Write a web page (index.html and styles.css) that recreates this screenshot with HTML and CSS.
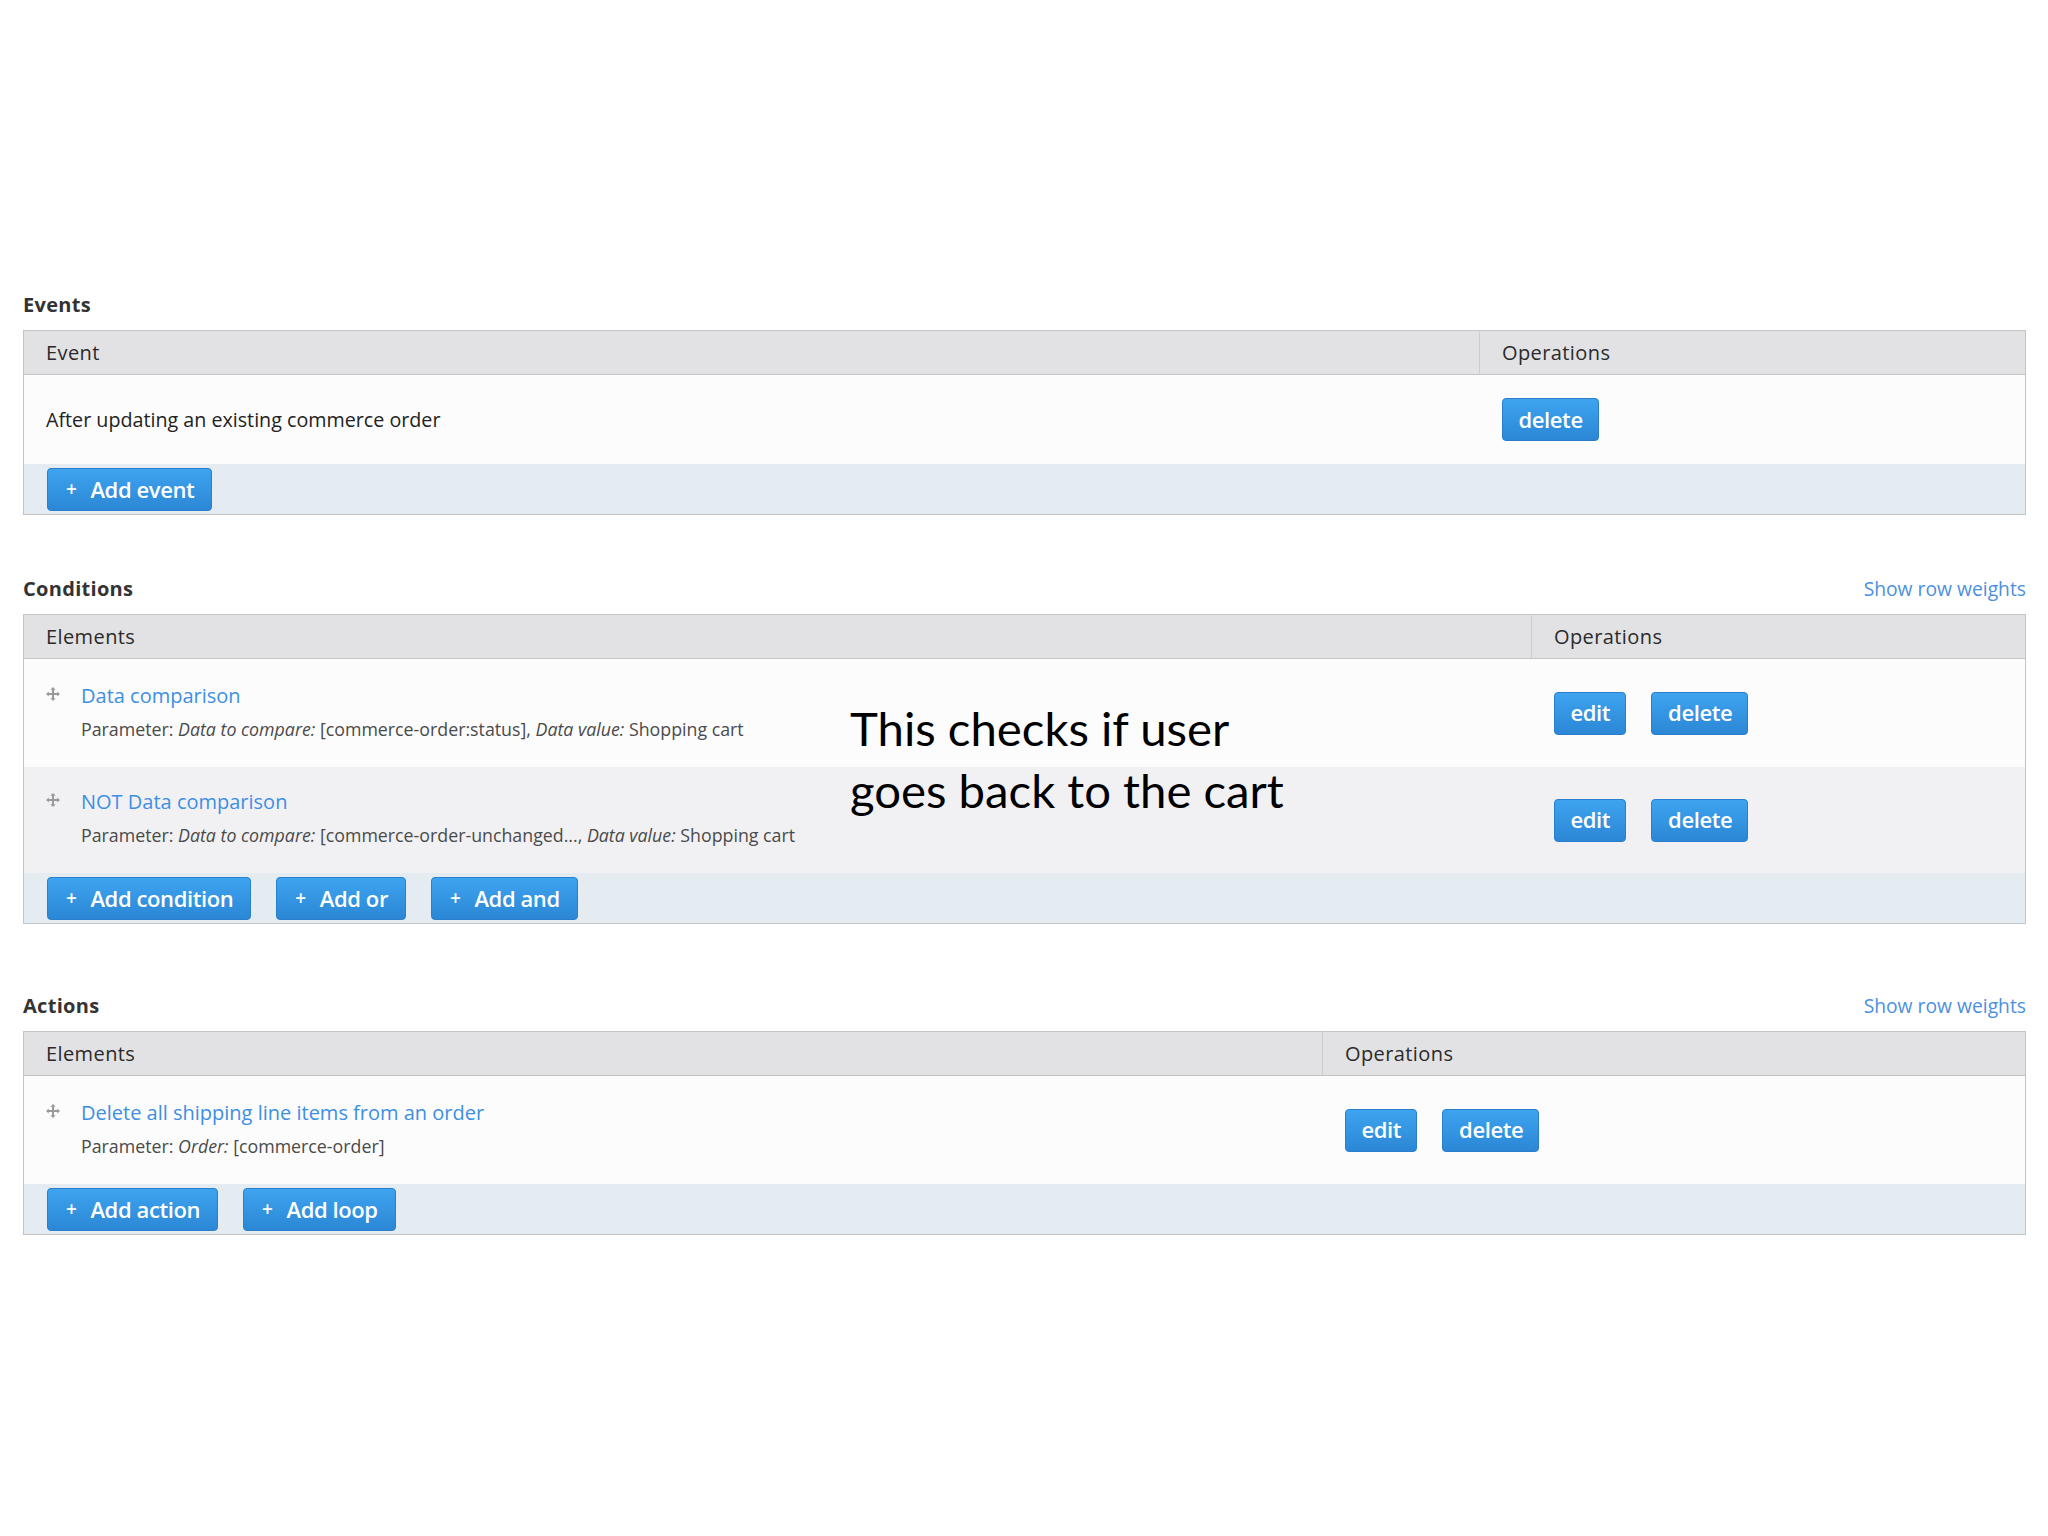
FILE: index.html
```html
<!DOCTYPE html>
<html lang="en">
<head>
<meta charset="utf-8">
<title>Rules</title>
<link rel="stylesheet" href="styles.css">
</head>
<body>
<div class="page">

  <section class="section section-events">
    <div class="section-head">
      <h2 class="section-title">Events</h2>
    </div>
    <table class="rules-table">
      <thead>
        <tr><th>Event</th><th class="ops ops-events">Operations</th></tr>
      </thead>
      <tbody>
        <tr class="row-odd">
          <td class="cell-plain">After updating an existing commerce order</td>
          <td class="cell-ops"><button class="btn">delete</button></td>
        </tr>
      </tbody>
      <tfoot>
        <tr><td colspan="2" class="cell-foot"><div class="foot-buttons"><button class="btn"><span class="plus">+</span>Add event</button></div></td></tr>
      </tfoot>
    </table>
  </section>

  <section class="section section-conditions">
    <div class="section-head">
      <h2 class="section-title">Conditions</h2>
      <a class="weights-link" href="#">Show row weights</a>
    </div>
    <table class="rules-table">
      <thead>
        <tr><th>Elements</th><th class="ops ops-conditions">Operations</th></tr>
      </thead>
      <tbody>
        <tr class="row-odd">
          <td class="cell-element">
            <div class="element">
              <svg class="handle" viewBox="0 0 14 14" aria-hidden="true"><path d="M7 2v10M2 7h10" stroke="#9a9a9a" stroke-width="2" fill="none"/><path d="M7 0l2.6 2.8H4.4zM7 14l2.6-2.8H4.4zM0 7l2.8-2.6v5.2zM14 7l-2.8-2.6v5.2z" fill="#9a9a9a"/></svg>
              <div class="element-body">
                <a class="element-link" href="#">Data comparison</a>
                <div class="element-param">Parameter: <em>Data to compare:</em> [commerce-order:status], <em>Data value:</em> Shopping cart</div>
              </div>
            </div>
          </td>
          <td class="cell-ops"><div class="op-buttons"><button class="btn">edit</button><button class="btn">delete</button></div></td>
        </tr>
        <tr class="row-even">
          <td class="cell-element">
            <div class="element">
              <svg class="handle" viewBox="0 0 14 14" aria-hidden="true"><path d="M7 2v10M2 7h10" stroke="#9a9a9a" stroke-width="2" fill="none"/><path d="M7 0l2.6 2.8H4.4zM7 14l2.6-2.8H4.4zM0 7l2.8-2.6v5.2zM14 7l-2.8-2.6v5.2z" fill="#9a9a9a"/></svg>
              <div class="element-body">
                <a class="element-link" href="#">NOT Data comparison</a>
                <div class="element-param">Parameter: <em>Data to compare:</em> [commerce-order-unchanged..., <em>Data value:</em> Shopping cart</div>
              </div>
            </div>
          </td>
          <td class="cell-ops"><div class="op-buttons"><button class="btn">edit</button><button class="btn">delete</button></div></td>
        </tr>
      </tbody>
      <tfoot>
        <tr><td colspan="2" class="cell-foot"><div class="foot-buttons"><button class="btn"><span class="plus">+</span>Add condition</button><button class="btn"><span class="plus">+</span>Add or</button><button class="btn"><span class="plus">+</span>Add and</button></div></td></tr>
      </tfoot>
    </table>
  </section>

  <section class="section section-actions">
    <div class="section-head">
      <h2 class="section-title">Actions</h2>
      <a class="weights-link" href="#">Show row weights</a>
    </div>
    <table class="rules-table">
      <thead>
        <tr><th>Elements</th><th class="ops ops-actions">Operations</th></tr>
      </thead>
      <tbody>
        <tr class="row-odd">
          <td class="cell-element">
            <div class="element">
              <svg class="handle" viewBox="0 0 14 14" aria-hidden="true"><path d="M7 2v10M2 7h10" stroke="#9a9a9a" stroke-width="2" fill="none"/><path d="M7 0l2.6 2.8H4.4zM7 14l2.6-2.8H4.4zM0 7l2.8-2.6v5.2zM14 7l-2.8-2.6v5.2z" fill="#9a9a9a"/></svg>
              <div class="element-body">
                <a class="element-link" href="#">Delete all shipping line items from an order</a>
                <div class="element-param">Parameter: <em>Order:</em> [commerce-order]</div>
              </div>
            </div>
          </td>
          <td class="cell-ops"><div class="op-buttons"><button class="btn">edit</button><button class="btn">delete</button></div></td>
        </tr>
      </tbody>
      <tfoot>
        <tr><td colspan="2" class="cell-foot"><div class="foot-buttons"><button class="btn"><span class="plus">+</span>Add action</button><button class="btn"><span class="plus">+</span>Add loop</button></div></td></tr>
      </tfoot>
    </table>
  </section>

  <p class="annotation">This checks if user<br>goes back to the cart</p>
</div>
</body>
</html>
```

FILE: styles.css
```css
* {
  box-sizing: border-box;
}

html, body {
  margin: 0;
  padding: 0;
  background: #ffffff;
}

body {
  font-family: "Open Sans", "Liberation Sans", sans-serif;
  color: #2b2b2b;
}

.page {
  position: relative;
  padding: 292px 22px 200px 23px;
  min-height: 1536px;
}

.section-conditions {
  margin-top: 61px;
}

.section-actions {
  margin-top: 69px;
}

.section-head {
  display: flex;
  justify-content: space-between;
  align-items: center;
  height: 26px;
  margin-bottom: 12px;
}

.section-title {
  margin: 0;
  font-size: 20px;
  line-height: 26px;
  font-weight: 700;
  color: #333;
  letter-spacing: 0.3px;
}

.weights-link {
  font-size: 19.3px;
  line-height: 26px;
  color: #4d90e0;
  text-decoration: none;
}

.rules-table {
  width: 100%;
  border-collapse: collapse;
  border: 1px solid #c4c4c4;
}

.rules-table th {
  background: #e2e2e4;
  border-bottom: 1px solid #c4c4c4;
  text-align: left;
  font-weight: 400;
  font-size: 20px;
  line-height: 27px;
  padding: 8px 22px;
  color: #2a2a2a;
  letter-spacing: 0.4px;
}

.rules-table th.ops {
  border-left: 1px solid #cdcdcd;
}

.ops-events { width: 546px; }
.ops-conditions { width: 494px; }
.ops-actions { width: 703px; }

.row-odd td {
  background: #fcfcfd;
}

.row-even td {
  background: #f1f1f3;
}

.cell-plain {
  padding: 23px 22px;
  font-size: 19.7px;
  line-height: 26px;
  color: #222;
  vertical-align: middle;
}

.cell-ops {
  padding: 23px 22px;
  vertical-align: middle;
}

.cell-element {
  padding: 22px 22px 20px;
  vertical-align: top;
}

.row-even .cell-element {
  padding-top: 20px;
  padding-bottom: 20px;
}

.element {
  display: flex;
  align-items: flex-start;
}

.handle {
  width: 14px;
  height: 14px;
  margin: 6px 21px 0 0;
  flex: none;
}

.element-body {
  display: flex;
  flex-direction: column;
}

.element-link {
  font-size: 20px;
  line-height: 30px;
  color: #3d8fe3;
  text-decoration: none;
}

.element-param {
  font-size: 17.8px;
  line-height: 36px;
  color: #4a4a4a;
}

.element-param em {
  font-style: italic;
}

.op-buttons {
  display: flex;
  gap: 25px;
}

.cell-foot {
  background: #e4ebf1;
  padding: 4px 23px 3px;
}

.foot-buttons {
  display: flex;
  gap: 25px;
}

.btn {
  display: inline-flex;
  align-items: center;
  height: 43px;
  padding: 0 15px 2px 16px;
  border: 1px solid #2a7fcc;
  border-radius: 4px;
  background: linear-gradient(#3ea4ef, #2b87d5);
  color: #ffffff;
  font-family: "Open Sans", "Liberation Sans", sans-serif;
  font-size: 22px;
  font-weight: 600;
  letter-spacing: -0.4px;
  cursor: pointer;
}

.foot-buttons .btn {
  padding: 0 17px 2px 18px;
}

.plus {
  font-size: 19px;
  font-weight: 600;
  margin-right: 14px;
}

.annotation {
  position: absolute;
  left: 850px;
  top: 697px;
  margin: 0;
  font-family: "Lato", "Open Sans", sans-serif;
  font-size: 47.3px;
  line-height: 62px;
  color: #000;
}
```
